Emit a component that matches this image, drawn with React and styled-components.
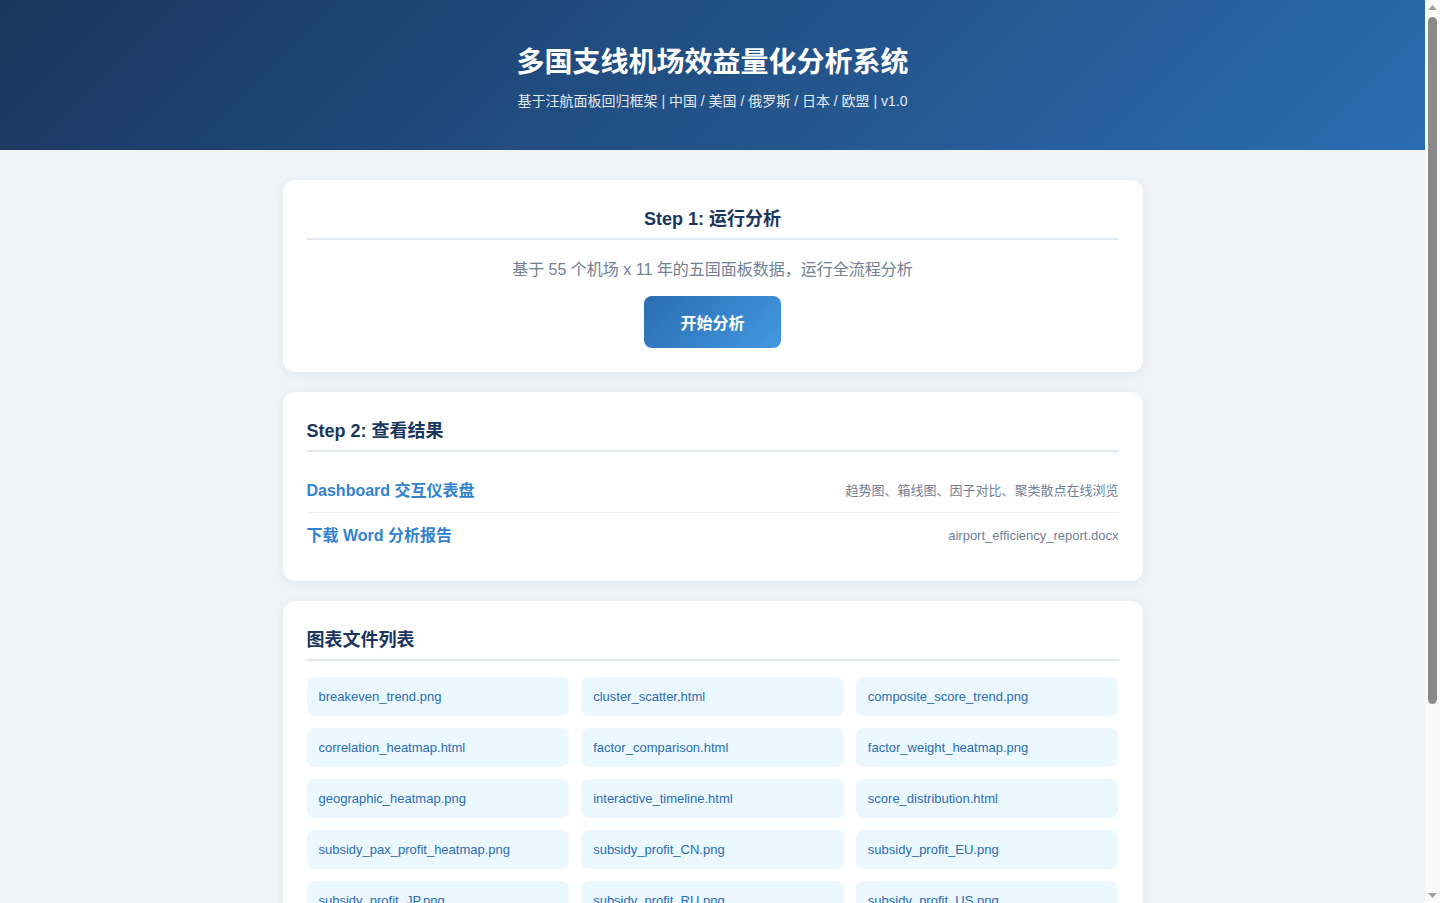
import React from 'react'
import styled, { createGlobalStyle } from 'styled-components'

const GlobalStyle = createGlobalStyle`
  * {
    box-sizing: border-box;
  }
  body {
    margin: 0;
    background: #f0f4f8;
    font-family: "Liberation Sans", "Noto Sans CJK SC", sans-serif;
    color: #2d3748;
  }
`

const Page = styled.div`
  margin-right: 15px;
`

/* the window's scrollbar, drawn since the headless shot hides it */
const Rail = styled.div`
  position: fixed;
  top: 0;
  right: 0;
  width: 15px;
  height: 100vh;
  background: #fafafa;
  display: flex;
  flex-direction: column;
  align-items: center;
  justify-content: space-between;
  padding: 5px 0;
`

const Thumb = styled.div`
  position: absolute;
  left: 3px;
  top: 17px;
  width: 9px;
  height: 687px;
  border-radius: 5px;
  background: #8a8a8a;
`

const Arrow = styled.svg`
  width: 9px;
  height: 5px;
  display: block;
`

const Header = styled.header`
  background: linear-gradient(135deg, #1a365d 0%, #2b6cb0 100%);
  color: #fff;
  text-align: center;
  padding: 43px 20px 39px;
`

const Title = styled.h1`
  margin: 0 0 8px;
  font-size: 28px;
  line-height: 40px;
  font-weight: 700;
`

const Subtitle = styled.p`
  margin: 0;
  font-size: 14px;
  line-height: 20px;
  opacity: 0.88;
`

const Container = styled.main`
  max-width: 860px;
  margin: 30px auto;
`

const Card = styled.section`
  background: #fff;
  border-radius: 12px;
  padding: 24px;
  margin-bottom: 20px;
  box-shadow: 0 2px 10px rgba(26, 54, 93, 0.07);
  text-align: ${(p) => (p.$center ? 'center' : 'left')};
`

const CardTitle = styled.h2`
  margin: 0 0 16px;
  padding: 2px 0 6px;
  border-bottom: 2px solid #e2e8f0;
  font-size: 18px;
  line-height: 26px;
  font-weight: 700;
  color: #1a365d;
`

const Desc = styled.p`
  margin: 0 0 13px;
  padding-top: 1px;
  font-size: 16px;
  line-height: 26px;
  color: #718096;
`

const RunButton = styled.button`
  border: none;
  border-radius: 8px;
  padding: 16px 36px 12px;
  font-family: inherit;
  font-size: 16px;
  line-height: 24px;
  font-weight: 700;
  color: #fff;
  background: linear-gradient(135deg, #2b6cb0 0%, #4299e1 100%);
  cursor: pointer;
`

const LinkRow = styled.div`
  display: flex;
  align-items: center;
  justify-content: space-between;
  padding: 13px 0 11px;
  line-height: 20px;
  border-bottom: ${(p) => (p.$last ? 'none' : '1px solid #edf2f7')};
`

const RowLink = styled.a`
  font-size: 16px;
  font-weight: 700;
  color: #3182ce;
  text-decoration: none;
`

const RowNote = styled.span`
  font-size: 13px;
  color: #718096;
`

const FileGrid = styled.div`
  display: grid;
  grid-template-columns: repeat(3, 1fr);
  gap: 12px;
`

const FileItem = styled.a`
  display: block;
  padding: 10px 12px;
  line-height: 19px;
  font-size: 13px;
  color: #2b6cb0;
  background: #ebf8ff;
  border-radius: 8px;
  text-decoration: none;
  white-space: nowrap;
  overflow: hidden;
  text-overflow: ellipsis;
`

const Footer = styled.footer`
  text-align: center;
  font-size: 12px;
  color: #a0aec0;
  padding: 10px 0 0;
`

const files = [
  'breakeven_trend.png',
  'cluster_scatter.html',
  'composite_score_trend.png',
  'correlation_heatmap.html',
  'factor_comparison.html',
  'factor_weight_heatmap.png',
  'geographic_heatmap.png',
  'interactive_timeline.html',
  'score_distribution.html',
  'subsidy_pax_profit_heatmap.png',
  'subsidy_profit_CN.png',
  'subsidy_profit_EU.png',
  'subsidy_profit_JP.png',
  'subsidy_profit_RU.png',
  'subsidy_profit_US.png',
  'traffic_boxplot.png',
  'trend_comparison.html',
  'wang_panel_summary.png',
]

function ScrollRail() {
  return (
    <Rail>
      <Arrow viewBox="0 0 9 5">
        <path d="M4.5 0 L9 5 L0 5 Z" fill="#a3a3a3" />
      </Arrow>
      <Thumb />
      <Arrow viewBox="0 0 9 5">
        <path d="M0 0 L9 0 L4.5 5 Z" fill="#a3a3a3" />
      </Arrow>
    </Rail>
  )
}

function App() {
  return (
    <>
      <GlobalStyle />
      <Page>
        <Header>
          <Title>多国支线机场效益量化分析系统</Title>
          <Subtitle>基于汪航面板回归框架 | 中国 / 美国 / 俄罗斯 / 日本 / 欧盟 | v1.0</Subtitle>
        </Header>

        <Container>
          <Card $center>
            <CardTitle>Step 1: 运行分析</CardTitle>
            <Desc>基于 55 个机场 x 11 年的五国面板数据，运行全流程分析</Desc>
            <RunButton>开始分析</RunButton>
          </Card>

          <Card>
            <CardTitle>Step 2: 查看结果</CardTitle>
            <LinkRow>
              <RowLink href="#">Dashboard 交互仪表盘</RowLink>
              <RowNote>趋势图、箱线图、因子对比、聚类散点在线浏览</RowNote>
            </LinkRow>
            <LinkRow $last>
              <RowLink href="#">下载 Word 分析报告</RowLink>
              <RowNote>airport_efficiency_report.docx</RowNote>
            </LinkRow>
          </Card>

          <Card>
            <CardTitle>图表文件列表</CardTitle>
            <FileGrid>
              {files.map((f) => (
                <FileItem key={f} href="#">
                  {f}
                </FileItem>
              ))}
            </FileGrid>
          </Card>

          <Footer>多国支线机场效益量化分析系统 v1.0</Footer>
        </Container>
      </Page>
      <ScrollRail />
    </>
  )
}

export default App
